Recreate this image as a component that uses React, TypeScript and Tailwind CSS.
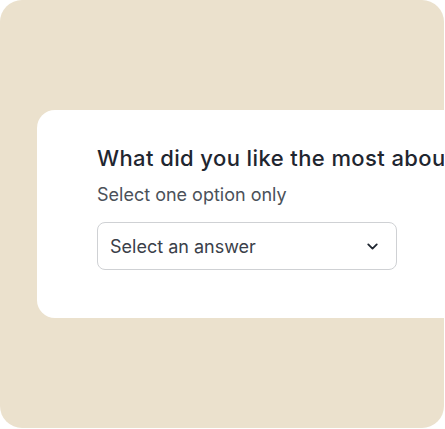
import { ChevronDown } from "lucide-react"

export default function App() {
	return (
		<div className="w-[445px] h-[429px] bg-white">
			<div
				className="w-[444px] h-[428px] bg-[#ebe1cd] rounded-[22px] overflow-hidden pt-[110px] pl-[37px]"
				style={{ fontFamily: "Inter, 'Noto Sans', sans-serif" }}
			>
				{/* Question card */}
				<div className="w-[480px] h-[208px] bg-white rounded-[18px] pl-[60px] pt-[33px]">
					<h2 className="text-[22px] leading-[30px] font-medium text-[#1f2630] whitespace-nowrap tracking-[0.4px]">
						What did you like the most about your experience?
					</h2>
					<p className="mt-[10px] text-[18px] leading-[24px] text-[#4b5159]">
						Select one option only
					</p>
					<button className="mt-[15px] w-[300px] h-[48px] rounded-[8px] border border-[#cfd1d4] flex items-center justify-between pl-[12px] pr-[15px] text-[18px] text-[#3a4049]">
						<span>Select an answer</span>
						<ChevronDown size={17} strokeWidth={2.6} className="text-[#1f2630]" />
					</button>
				</div>
			</div>
		</div>
	)
}
